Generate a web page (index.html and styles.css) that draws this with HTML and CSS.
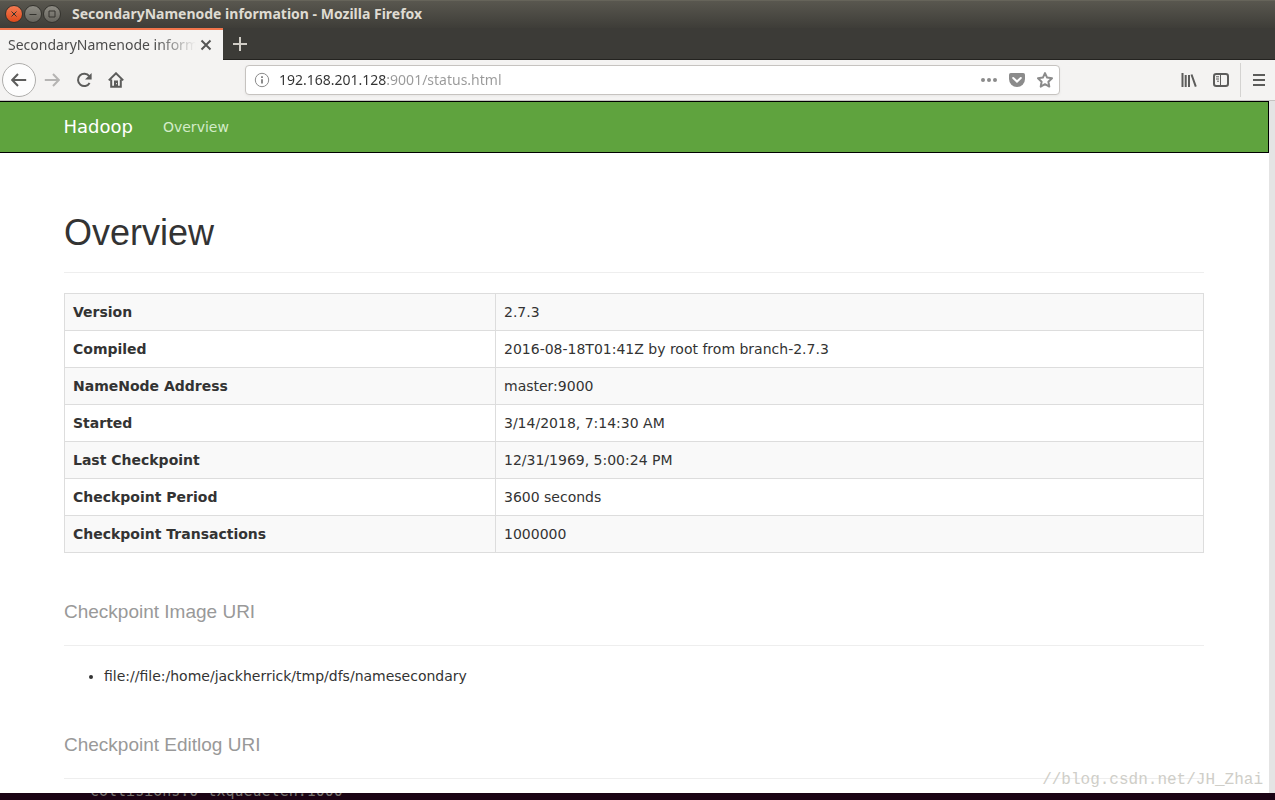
FILE: index.html
```html
<!DOCTYPE html>
<html lang="en">
<head>
<meta charset="utf-8">
<title>SecondaryNamenode information</title>
<link rel="stylesheet" href="styles.css">
</head>
<body>
<div class="window">
  <header class="titlebar">
    <button class="wm-button wm-close" aria-label="Close window"><svg viewBox="0 0 16 16"><path d="M5.5 5.5l5 5M10.5 5.5l-5 5"/></svg></button>
    <button class="wm-button" aria-label="Minimize"><svg viewBox="0 0 16 16"><path d="M4.5 8.5h7"/></svg></button>
    <button class="wm-button" aria-label="Maximize"><svg viewBox="0 0 16 16"><path d="M5 5h6v6H5z"/></svg></button>
    <span class="window-title">SecondaryNamenode information - Mozilla Firefox</span>
  </header>

  <div class="tabstrip">
    <div class="tab">
      <span class="tab-title">SecondaryNamenode information</span>
      <button class="tab-close" aria-label="Close tab"><svg viewBox="0 0 12 12"><path d="M1.5 1.5l9 9M10.5 1.5l-9 9"/></svg></button>
    </div>
    <button class="new-tab" aria-label="New tab"><svg viewBox="0 0 14 14"><path d="M7 0v14M0 7h14"/></svg></button>
  </div>

  <div class="toolbar">
    <div class="nav-buttons">
      <button class="tool back" aria-label="Back"><svg viewBox="0 0 16 16"><path d="M15.2 8H1.5M7 2L1.2 8L7 14"/></svg></button>
      <button class="tool forward" aria-label="Forward" disabled><svg viewBox="0 0 16 16"><path d="M.8 8h13.7M9 2l5.8 6L9 14"/></svg></button>
      <button class="tool" aria-label="Reload"><svg viewBox="0 0 16 16"><path d="M13.2 4.2A6.2 6.2 0 1 0 13.6 11"/><path class="solid" d="M15.6 1v6.6H9z"/></svg></button>
      <button class="tool" aria-label="Home"><svg viewBox="0 0 16 16"><path d="M.8 8.4L8 1.3l7.2 7.1M3.2 7.5V14.8h9.6V7.5"/><path class="solid" d="M6 8.5h4v6H6z"/><path class="hole" d="M8.5 11.2v1"/></svg></button>
    </div>
    <div class="urlbar">
      <button class="url-button" aria-label="Site information"><svg viewBox="0 0 16 16"><circle cx="8" cy="8" r="6.7"/><path class="stem" d="M8 7.2v4.3M8 4.3v1.7"/></svg></button>
      <input class="url" type="text" aria-label="Address" value="192.168.201.128:9001/status.html">
      <button class="url-button" aria-label="Page actions"><svg viewBox="0 0 16 16"><g class="solid"><circle cx="2" cy="8" r="2"/><circle cx="8" cy="8" r="2"/><circle cx="14" cy="8" r="2"/></g></svg></button>
      <button class="url-button" aria-label="Save to Pocket"><svg viewBox="0 0 16 16"><path class="solid" d="M1.8 1h12.4Q16 1 16 2.8V7a8 8 0 0 1-16 0V2.8Q0 1 1.8 1z"/><path class="check" d="M4.2 6L8 9.6L11.8 6"/></svg></button>
      <button class="url-button" aria-label="Bookmark"><svg viewBox="0 0 16 16"><path class="star" d="M8 1.1l2.1 4.5 4.9.7-3.6 3.4.9 4.9L8 12.2l-4.3 2.4.9-4.9L1 6.3l4.9-.7z"/></svg></button>
    </div>
    <div class="menu-buttons">
      <button class="tool" aria-label="Library"><svg viewBox="0 0 16 16"><path d="M1.5 1v14M4.7 3v12M8 3v12M10.5 2.5l4.3 12.2"/></svg></button>
      <button class="tool" aria-label="Sidebars"><svg viewBox="0 0 16 16"><rect x="1" y="2" width="14" height="12" rx="2.2"/><path class="thin" d="M7.5 2v12M3 4.8h3M3 7h3M4 9.2h2"/></svg></button>
      <span class="divider"></span>
      <button class="tool" aria-label="Open menu"><svg viewBox="0 0 16 16"><path d="M2 3h12M2 8h12M2 13h12"/></svg></button>
    </div>
  </div>

  <div class="viewport">
    <div class="page">
      <nav class="navbar">
        <div class="container nav-inner">
          <a class="brand" href="#">Hadoop</a>
          <a class="nav-link" href="#">Overview</a>
        </div>
      </nav>
      <main class="container">
        <h1 class="page-title">Overview</h1>
        <table class="summary">
          <tbody>
            <tr><th scope="row">Version</th><td>2.7.3</td></tr>
            <tr><th scope="row">Compiled</th><td>2016-08-18T01:41Z by root from branch-2.7.3</td></tr>
            <tr><th scope="row">NameNode Address</th><td>master:9000</td></tr>
            <tr><th scope="row">Started</th><td>3/14/2018, 7:14:30 AM</td></tr>
            <tr><th scope="row">Last Checkpoint</th><td>12/31/1969, 5:00:24 PM</td></tr>
            <tr><th scope="row">Checkpoint Period</th><td>3600 seconds</td></tr>
            <tr><th scope="row">Checkpoint Transactions</th><td>1000000</td></tr>
          </tbody>
        </table>
        <h2 class="section-title">Checkpoint Image URI</h2>
        <ul class="uris"><li>file://file:/home/jackherrick/tmp/dfs/namesecondary</li></ul>
        <h2 class="section-title">Checkpoint Editlog URI</h2>
      </main>
    </div>
    <div class="scrollbar"></div>
  </div>

  <div class="terminal"><span>collisions:0 txqueuelen:1000</span></div>
  <span class="watermark">//blog.csdn.net/JH_Zhai</span>
</div>
</body>
</html>
```
FILE: styles.css
```css
* { box-sizing: border-box; }

body {
  margin: 0;
  font-family: "DejaVu Sans", sans-serif;
  font-size: 14px;
  line-height: 20px;
  color: #333;
}

button {
  display: flex;
  align-items: center;
  justify-content: center;
  flex: none;
  padding: 0;
  border: 0;
  background: none;
}

svg {
  display: block;
  fill: none;
  stroke: currentColor;
}

svg .solid { fill: currentColor; stroke: none; }

.window {
  position: relative;
  display: flex;
  flex-direction: column;
  height: 100vh;
  overflow: hidden;
}

/* Window frame */
.titlebar {
  display: flex;
  flex: none;
  align-items: center;
  height: 28px;
  padding-left: 5px;
  background: linear-gradient(#5a5850, #3e3d38);
  box-shadow: inset 0 1px #66645a;
}

.wm-button {
  width: 18px;
  height: 18px;
  margin-right: 1px;
  border: 1px solid #34332e;
  border-radius: 50%;
  background: linear-gradient(#8d8b83, #67655e);
  color: #34332e;
}

.wm-button svg { flex: none; width: 16px; height: 16px; }
.wm-close { background: linear-gradient(#f47b52, #df4a1b); }

.window-title {
  margin-left: 10px;
  font: bold 14px/20px "Noto Sans", sans-serif;
  color: #dfdbd2;
}

.tabstrip {
  display: flex;
  flex: none;
  height: 32px;
  background: #3c3b37;
  box-shadow: inset 0 -1px #242320;
}

.tab {
  display: flex;
  align-items: center;
  gap: 4px;
  width: 223px;
  padding: 0 11px 0 8px;
  border-top: 2px solid #f1754c;
  background: #f4f3f2;
  color: #4c4c4c;
}

.tab-title {
  flex: 1;
  overflow: hidden;
  font: 14px/20px "Noto Sans", sans-serif;
  white-space: nowrap;
  mask-image: linear-gradient(to left, transparent, #000 40px);
}

.tab-close svg { width: 12px; height: 12px; stroke-width: 2; }
.tab-close { color: #555; }
.new-tab { width: 34px; color: #d0cdc6; }
.new-tab svg { width: 14px; height: 14px; stroke-width: 2; }

/* Toolbar */
.toolbar {
  display: flex;
  flex: none;
  align-items: center;
  justify-content: space-between;
  height: 41px;
  padding-left: 2px;
  border-bottom: 1px solid #c5c3c1;
  background: #f4f3f2;
}

.nav-buttons, .menu-buttons { display: flex; align-items: center; }
.nav-buttons { width: 243px; }
.menu-buttons { width: 215px; justify-content: flex-end; }

.tool { width: 32px; height: 34px; color: #5c5c5b; }
.tool svg { width: 16px; height: 16px; stroke-width: 2; }
.back { width: 34px; border: 1px solid #aeadab; border-radius: 50%; background: #fdfdfd; }
.forward { color: #b5b4b3; }
.tool .hole { stroke: #f4f3f2; stroke-width: 1; }
.tool .thin { stroke-width: 1; }
.divider { width: 1px; height: 34px; margin: 0 2px 0 3px; background: #d4d3d1; }

.urlbar {
  display: flex;
  flex: 1;
  align-items: center;
  gap: 12px;
  height: 30px;
  padding: 0 6px 0 8px;
  border: 1px solid #c6c3c0;
  border-radius: 4px;
  background: #fff;
  box-shadow: 0 1px 3px #0000000d;
}

.url {
  flex: 1;
  min-width: 0;
  margin-left: -3px;
  padding: 0;
  border: 0;
  outline: 0;
  font: 14px/20px "Noto Sans", sans-serif;
  color: transparent;
  background: linear-gradient(to right, #333 108px, #999 108px);
  background-clip: text;
}

.url-button { color: #8b8b8b; }
.url-button svg { width: 16px; height: 16px; }
.url-button .stem { stroke-width: 2; }
.url-button .check { stroke: #fff; stroke-width: 2; stroke-linecap: round; }
.url-button .star { stroke-width: 2; stroke-linejoin: round; }

/* Web page */
.viewport {
  display: flex;
  flex: 1;
  min-height: 0;
  overflow: hidden;
  background: #fff;
}

.page { flex: 1; overflow: hidden; }
.scrollbar { width: 6px; background: #e4e4e4; }

.navbar { border: 1px solid #000; border-left: 0; background: #5fa33e; }
.container { max-width: 1171px; margin: 0 auto; padding: 0 16px 0 15px; }
.nav-inner { display: flex; align-items: center; gap: 30px; height: 50px; }
.navbar a { text-decoration: none; }
.brand { font-size: 18px; color: #fff; }
.nav-link { color: #d3ecc8; }

.page-title, .section-title {
  margin: 0 0 20px;
  border-bottom: 1px solid #eee;
  font-family: "Liberation Sans", sans-serif;
  font-weight: normal;
}

.page-title {
  padding: 60px 0 19px;
  font-size: 36px;
  line-height: 40px;
}

.section-title {
  padding: 48px 0 22px;
  font-size: 19px;
  line-height: 22px;
  color: #999;
}

.summary { width: 100%; border-collapse: collapse; }
.summary th, .summary td { padding: 8px; border: 1px solid #ddd; text-align: left; }
.summary th { width: 431px; }
.summary tr:nth-child(odd) { background: #f9f9f9; }
.uris { margin: 0; padding-left: 40px; }

/* Terminal window behind the browser */
.terminal {
  display: flex;
  flex: none;
  align-items: flex-end;
  height: 7px;
  padding-left: 90px;
  overflow: hidden;
  background: #1b0414;
  font: 15px/18px "DejaVu Sans Mono", monospace;
  color: #77736f;
}

.watermark {
  position: absolute;
  right: 12px;
  bottom: 8px;
  font: 16px/24px "Liberation Mono", monospace;
  color: #cfcec8;
}
```
